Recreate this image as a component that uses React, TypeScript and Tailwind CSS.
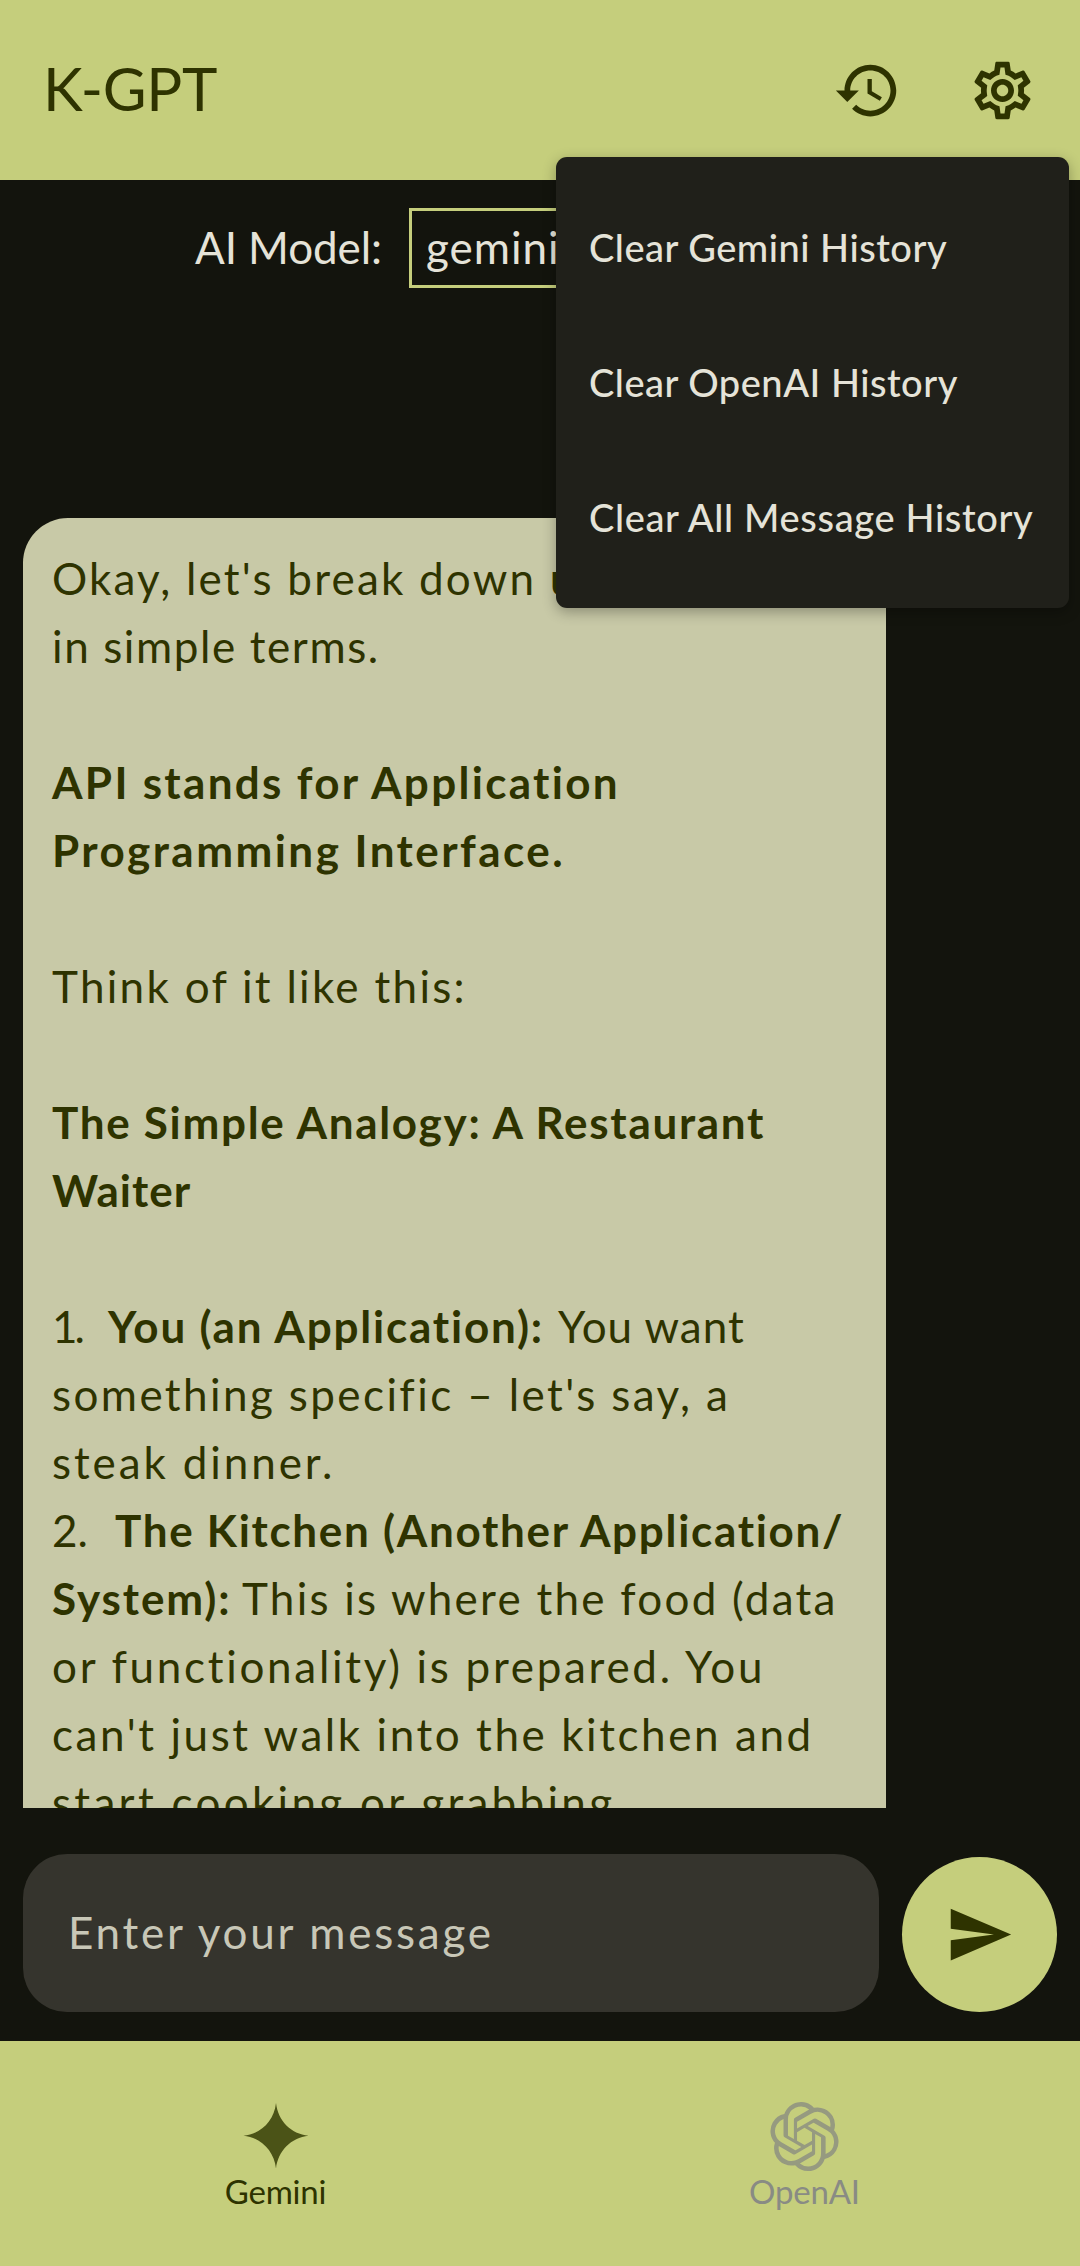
import type { ReactNode } from "react";
import { MdOutlineSettings } from "react-icons/md";
import { SiOpenai } from "react-icons/si";

function HistoryIcon() {
  return (
    <svg viewBox="0 0 24 24" className="size-[69px]" fill="currentColor" aria-hidden="true">
      <path d="M13 3c-4.97 0-9 4.03-9 9H1l3.89 3.89.07.14L9 12H6c0-3.87 3.13-7 7-7s7 3.13 7 7-3.13 7-7 7c-1.93 0-3.68-.79-4.94-2.06l-1.42 1.42C8.27 19.99 10.51 21 13 21c4.97 0 9-4.03 9-9s-4.03-9-9-9zm-1 5v5l4.28 2.54.72-1.21-3.5-2.08V8H12z" />
    </svg>
  );
}

function SendIcon() {
  return (
    <svg viewBox="0 0 24 24" className="size-[69px]" fill="currentColor" aria-hidden="true">
      <path d="M2 3v7l15 2-15 2v7l21-9z" />
    </svg>
  );
}

function SparkIcon() {
  return (
    <svg viewBox="0 0 70 70" className="size-[70px]" fill="currentColor" aria-hidden="true">
      <path d="M35 2C37 20 50 33 67.5 34.7C50 36.5 37 50 35 67.5C33 50 20 36.5 2.5 34.7C20 33 33 20 35 2Z" />
    </svg>
  );
}

function Header() {
  return (
    <header className="flex h-[180px] shrink-0 items-center justify-between bg-[#c5ce7c] pl-[43px] pr-[43px] text-[#2e3300]">
      <h1 className="pb-[5px] text-[60px] leading-none tracking-[-0.3px]">K-GPT</h1>
      <div className="flex items-center gap-[66px]">
        <button aria-label="Message history">
          <HistoryIcon />
        </button>
        <button aria-label="Settings">
          <MdOutlineSettings className="size-[69px]" />
        </button>
      </div>
    </header>
  );
}

function ModelPicker() {
  return (
    <div className="flex h-20 shrink-0 pl-[195px] text-[44px] leading-none text-[#e5e3d8]">
      <span className="flex w-[214px] items-center pb-[3px] tracking-[-0.1px]">AI Model:</span>
      <button className="flex w-[475px] items-center border-3 border-[#c5ce7c] pb-[3px] pl-[14px] tracking-[1px]">
        gemini-2.5-flash
      </button>
    </div>
  );
}

function Line({ className = "", children }: { className?: string; children?: ReactNode }) {
  return <div className={`flex h-[68px] ${className}`}>{children}</div>;
}

function Message() {
  return (
    <article className="ml-[23px] w-[863px] whitespace-pre rounded-tl-[45px] rounded-tr-[45px] bg-[#c8c9a7] pl-[29px] pt-[26px] text-[44px] leading-[68px] text-[#2e3300]">
      <Line className="tracking-[2.2px]">Okay, let's break down using APIs</Line>
      <Line className="tracking-[1.6px]">in simple terms.</Line>
      <Line />
      <Line className="font-bold tracking-[2.3px]">API stands for Application</Line>
      <Line className="font-bold tracking-[2.45px]">Programming Interface.</Line>
      <Line />
      <Line className="tracking-[2.3px]">Think of it like this:</Line>
      <Line />
      <Line className="font-bold tracking-[1.7px]">The Simple Analogy: A Restaurant</Line>
      <Line className="font-bold tracking-[1px]">Waiter</Line>
      <Line />
      <Line>
        <span className="w-[56px] tracking-[-3px]">1.</span>
        <strong className="w-[450px] font-bold tracking-[1.8px]">You (an Application):</strong>
        <span className="tracking-[1px]">You want</span>
      </Line>
      <Line className="tracking-[2.4px]">something specific – let's say, a</Line>
      <Line className="tracking-[2.9px]">steak dinner.</Line>
      <Line>
        <span className="w-[63px]">2.</span>
        <strong className="font-bold tracking-[1.7px]">The Kitchen (Another Application/</strong>
      </Line>
      <Line>
        <strong className="w-[190px] font-bold tracking-[1.9px]">System):</strong>
        <span className="tracking-[2.25px]">This is where the food (data</span>
      </Line>
      <Line className="tracking-[2.7px]">or functionality) is prepared. You</Line>
      <Line className="tracking-[2.57px]">can't just walk into the kitchen and</Line>
      <Line className="tracking-[3.3px]">start cooking or grabbing</Line>
    </article>
  );
}

function Composer() {
  return (
    <div className="flex shrink-0 items-end gap-[23px] px-[23px] pb-[29px] pt-[46px]">
      <div className="flex h-[158px] flex-1 items-center rounded-[44px] bg-[#35342d] pb-[3px] pl-[45px] text-[44px] tracking-[2.75px] text-[#c8c7b7]">
        Enter your message
      </div>
      <button
        aria-label="Send"
        className="flex size-[155px] items-center justify-center rounded-full bg-[#c5ce7c] text-[#2e3300]"
      >
        <SendIcon />
      </button>
    </div>
  );
}

function BottomNav() {
  return (
    <nav className="grid h-[225px] shrink-0 grid-cols-2 bg-[#c5ce7c] px-[11px] pt-[60px] text-[33px] leading-10">
      <button className="flex flex-col items-center justify-start text-[#2e3300]">
        <span className="text-[#4b5317]">
          <SparkIcon />
        </span>
        <span className="tracking-[-0.2px]">Gemini</span>
      </button>
      <button className="flex flex-col items-center justify-start text-[#898b84]">
        <span className="flex h-[70px] items-center text-[#969a80]">
          <SiOpenai className="size-[69px]" />
        </span>
        <span className="tracking-[-0.2px]">OpenAI</span>
      </button>
    </nav>
  );
}

function HistoryMenu() {
  return (
    <div className="absolute left-[556px] top-[157px] flex h-[451px] w-[513px] flex-col rounded-[11px] bg-[#20201a] py-[23px] pl-[33px] text-[38px] font-medium text-[#e5e3d8] shadow-[0_4px_14px_rgba(0,0,0,0.3)]">
      <div className="flex h-[135px] items-center tracking-[0.5px]">Clear Gemini History</div>
      <div className="flex h-[135px] items-center tracking-[0.5px]">Clear OpenAI History</div>
      <div className="flex h-[135px] items-center tracking-[0.65px]">Clear All Message History</div>
    </div>
  );
}

export default function App() {
  return (
    <div className="relative flex h-[2266px] w-[1080px] flex-col overflow-hidden bg-[#13140d] font-['Lato',sans-serif]">
      <Header />
      <main className="flex min-h-0 flex-1 flex-col pt-7">
        <ModelPicker />
        <section className="mt-[230px] min-h-0 flex-1 overflow-hidden">
          <Message />
        </section>
      </main>
      <Composer />
      <BottomNav />
      <HistoryMenu />
    </div>
  );
}
